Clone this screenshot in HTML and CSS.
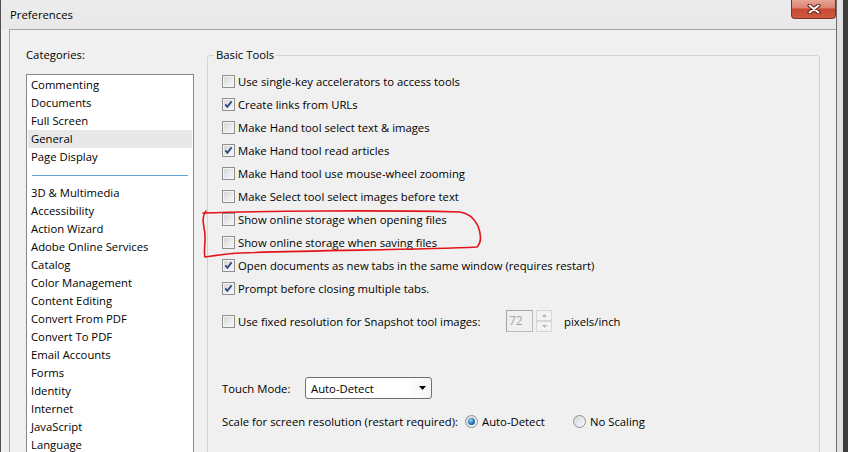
FILE: index.html
```html
<!DOCTYPE html>
<html>
<head>
<meta charset="utf-8">
<title>Preferences</title>
<link rel="stylesheet" href="styles.css">
</head>
<body>
<div class="window">
  <div class="main">
    <div class="titlebar">
      <span class="title">Preferences</span>
      <div class="close">
        <svg width="14" height="10" viewBox="0 0 14 10"><path d="M2.5 1.5L11.5 8.5M11.5 1.5L2.5 8.5" stroke="#5a1d14" stroke-width="4" stroke-linecap="round"/><path d="M2.5 1.5L11.5 8.5M11.5 1.5L2.5 8.5" stroke="#ffffff" stroke-width="2" stroke-linecap="round"/></svg>
      </div>
    </div>
    <div class="panel">
      <div class="cats">
        <div class="cats-label">Categories:</div>
        <ul class="list">
          <li>Commenting</li>
          <li>Documents</li>
          <li>Full Screen</li>
          <li class="sel">General</li>
          <li>Page Display</li>
          <li class="sep"></li>
          <li>3D &amp; Multimedia</li>
          <li>Accessibility</li>
          <li>Action Wizard</li>
          <li>Adobe Online Services</li>
          <li>Catalog</li>
          <li>Color Management</li>
          <li>Content Editing</li>
          <li>Convert From PDF</li>
          <li>Convert To PDF</li>
          <li>Email Accounts</li>
          <li>Forms</li>
          <li>Identity</li>
          <li>Internet</li>
          <li>JavaScript</li>
          <li>Language</li>
        </ul>
      </div>
      <fieldset class="group">
        <legend>Basic Tools</legend>
        <div class="row"><span class="cb"></span>Use single-key accelerators to access tools</div>
        <div class="row"><span class="cb on"></span>Create links from URLs</div>
        <div class="row"><span class="cb"></span>Make Hand tool select text &amp; images</div>
        <div class="row"><span class="cb on"></span>Make Hand tool read articles</div>
        <div class="row"><span class="cb"></span>Make Hand tool use mouse-wheel zooming</div>
        <div class="row"><span class="cb"></span>Make Select tool select images before text</div>
        <div class="row"><span class="cb"></span>Show online storage when opening files</div>
        <div class="row"><span class="cb"></span>Show online storage when saving files</div>
        <div class="row"><span class="cb on"></span>Open documents as new tabs in the same window (requires restart)</div>
        <div class="row"><span class="cb on"></span>Prompt before closing multiple tabs.</div>
        <div class="row snap">
          <span class="cb"></span><span class="snap-text">Use fixed resolution for Snapshot tool images:</span>
          <span class="num">72</span>
          <span class="spinbtns">
            <span class="sbtn"><svg width="5" height="3" viewBox="0 0 5 3"><path d="M0 3L2.5 0L5 3Z" fill="#b8b8b8"/></svg></span>
            <span class="sbtn"><svg width="5" height="3" viewBox="0 0 5 3"><path d="M0 0L2.5 3L5 0Z" fill="#b8b8b8"/></svg></span>
          </span>
          <span class="unit">pixels/inch</span>
        </div>
        <div class="row touch">
          <span class="touch-label">Touch Mode:</span>
          <div class="select"><span>Auto-Detect</span><svg width="7" height="4" viewBox="0 0 7 4"><path d="M0 0H7L3.5 4Z" fill="#000"/></svg></div>
        </div>
        <div class="row scale">
          <span class="scale-label">Scale for screen resolution (restart required):</span>
          <span class="radio on"></span><span class="opt1">Auto-Detect</span>
          <span class="radio"></span><span>No Scaling</span>
        </div>
      </fieldset>
    </div>
  </div>
  <svg class="annot" width="848" height="452" viewBox="0 0 848 452">
    <path d="M203 213 C 260 211, 380 210, 460 212 C 468 213, 474 218, 478 226 C 481 234, 482 242, 477 247 C 420 250, 320 250, 240 253 C 224 254, 212 256, 205 257 C 203 250, 207 238, 204 228 C 203 222, 202 216, 206 211" fill="none" stroke="#e3141a" stroke-width="1.6" stroke-linecap="round" stroke-linejoin="round"/>
  </svg>
</div>
</body>
</html>
```
FILE: styles.css
```css
html, body {
  margin: 0;
  padding: 0;
}
body {
  background: #3d3d3d;
  font-family: "Open Sans", "Noto Sans", sans-serif;
  font-size: 11.3px;
  color: #000;
  overflow: hidden;
}
.window {
  position: relative;
  display: flex;
  width: 843px;
  height: 452px;
  box-sizing: border-box;
  border-right: 6px solid #e2e2e2;
  overflow: hidden;
}
.main {
  width: 837px;
  box-sizing: border-box;
  border-left: 1px solid #505050;
  border-right: 1px solid #6e6e6e;
  background: #f0f0f0;
  display: flex;
  flex-direction: column;
}
.titlebar {
  height: 29px;
  flex: none;
  display: flex;
  justify-content: space-between;
  align-items: flex-start;
  background: linear-gradient(#ececec, #e8e8e8);
}
.title {
  padding-left: 9px;
  line-height: 30px;
}
.close {
  width: 45px;
  height: 19px;
  box-sizing: border-box;
  border: 1px solid #7e3226;
  border-top: none;
  border-radius: 0 0 4px 4px;
  background: linear-gradient(#e7a595 0%, #dc8371 42%, #c84a31 52%, #cc5a40 100%);
  display: flex;
  align-items: center;
  justify-content: center;
}
.panel {
  flex: 1;
  min-height: 0;
  margin-left: 8px;
  border-top: 1px solid #a3a3a3;
  border-left: 1px solid #a3a3a3;
  display: flex;
  align-items: flex-start;
  padding-left: 16px;
  overflow: hidden;
}
.cats {
  width: 168px;
  flex: none;
  padding-top: 17px;
}
.cats-label {
  line-height: 16px;
  margin-bottom: 11px;
}
.list {
  margin: 0;
  padding: 1px 0 0;
  list-style: none;
  background: #fff;
  border: 1px solid #828790;
  height: 500px;
}
.list li {
  height: 18px;
  line-height: 18px;
  margin: 0 1px;
  padding-left: 3px;
  white-space: nowrap;
}
.list li.sel {
  background: #e8e8e8;
}
.list li.sep {
  display: flex;
  align-items: center;
  padding: 0 4px;
}
.list li.sep::before {
  content: "";
  flex: 1;
  height: 1px;
  background: #5fa4d6;
}
.group {
  flex: none;
  margin: 17px 0 0 13px;
  width: 613px;
  height: 600px;
  box-sizing: border-box;
  border: 1px solid #d3d3d3;
  border-radius: 3px;
  padding: 7px 0 0 14px;
  min-width: 0;
}
.group legend {
  margin-left: -8px;
  padding: 0 2px;
  line-height: 16px;
}
.row {
  display: flex;
  align-items: center;
  height: 23px;
  white-space: nowrap;
}
.cb {
  flex: none;
  width: 13px;
  height: 13px;
  box-sizing: border-box;
  margin-right: 3px;
  border: 1px solid #8e8f8f;
  background: linear-gradient(135deg, #d3d3d3 0%, #ececec 60%, #f7f7f7 100%);
  box-shadow: inset 0 0 0 1px #f4f4f4;
}
.cb.on {
  background-image: url("data:image/svg+xml;utf8,<svg xmlns='http://www.w3.org/2000/svg' width='11' height='11' viewBox='0 0 11 11'><path d='M2.3 5.3L4.4 7.8L8.6 2.4' fill='none' stroke='%232a4a86' stroke-width='1.8'/></svg>"), linear-gradient(135deg, #d3d3d3 0%, #ececec 60%, #f7f7f7 100%);
  background-repeat: no-repeat;
}
.snap {
  margin-top: 10px;
  height: 22px;
}
.snap-text {
  width: 268px;
}
.num {
  width: 27px;
  height: 22px;
  box-sizing: border-box;
  border: 1px solid #bdbdbd;
  border-top-color: #a5a5a5;
  border-left-color: #a5a5a5;
  color: #a3a3a3;
  font-size: 12px;
  line-height: 20px;
  padding-left: 2px;
}
.spinbtns {
  margin-left: 3px;
  width: 16px;
  height: 22px;
  display: flex;
  flex-direction: column;
}
.sbtn {
  flex: 1;
  box-sizing: border-box;
  border: 1px solid #d6d6d6;
  background: #f3f3f3;
  display: flex;
  align-items: center;
  justify-content: center;
}
.unit {
  margin-left: 12px;
}
.touch {
  margin-top: 45px;
  height: 22px;
}
.touch-label {
  width: 83px;
}
.select {
  width: 127px;
  height: 22px;
  box-sizing: border-box;
  border: 1px solid #707070;
  border-radius: 3px;
  background: linear-gradient(to right, #ffffff 80%, #f3f3f3);
  display: flex;
  align-items: center;
  justify-content: space-between;
  padding: 0 5px;
}
.scale {
  margin-top: 11px;
  height: 22px;
}
.scale-label {
  width: 243px;
}
.radio {
  flex: none;
  position: relative;
  width: 13px;
  height: 13px;
  box-sizing: border-box;
  border-radius: 50%;
  border: 1px solid #8e8f8f;
  background: linear-gradient(135deg, #d6d6d6, #f8f8f8);
  margin-right: 4px;
}
.radio.on::after {
  content: "";
  position: absolute;
  inset: 2px;
  border-radius: 50%;
  background: radial-gradient(circle at 40% 35%, #9fdcff 0%, #2a7fc0 45%, #0e456f 100%);
}
.opt1 {
  width: 91px;
}
.annot {
  position: absolute;
  left: 0;
  top: 0;
  pointer-events: none;
}
```
